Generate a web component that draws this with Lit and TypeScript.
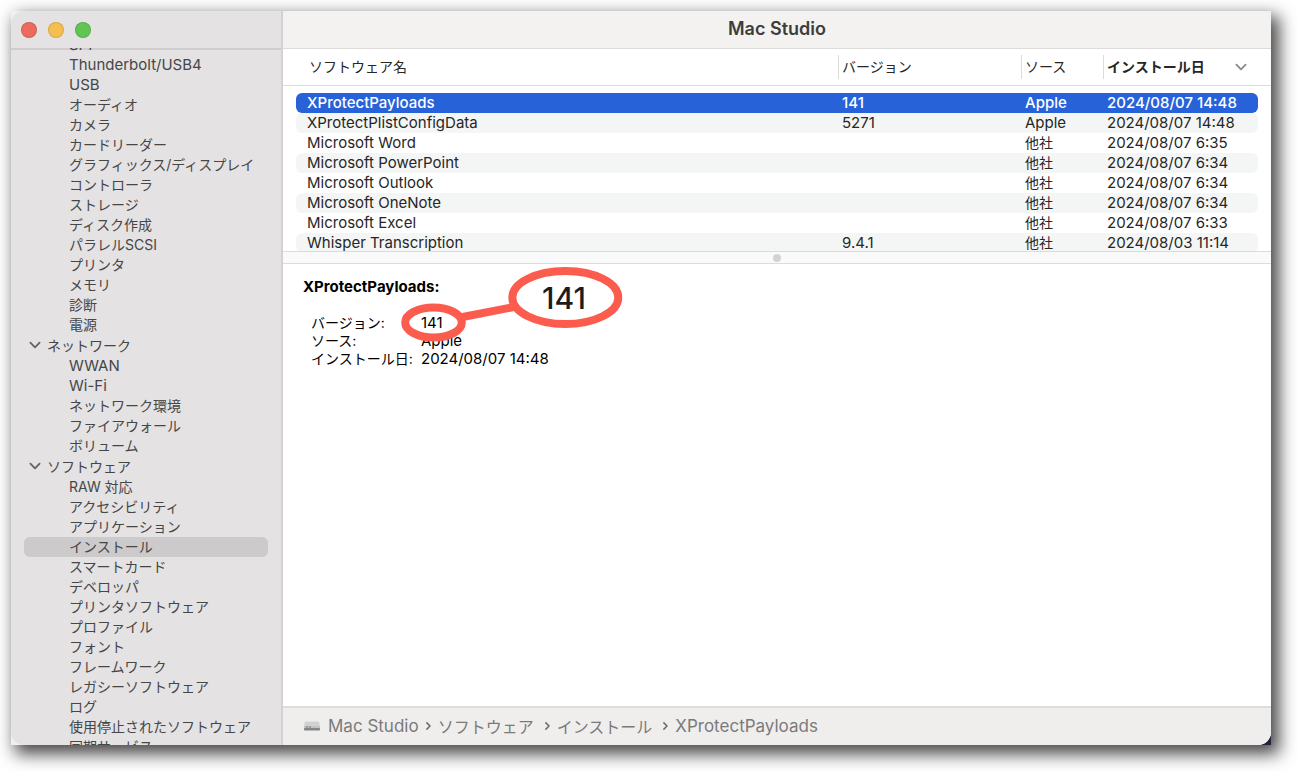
import { LitElement, html, css, svg } from "lit";
import { customElement, state } from "lit/decorators.js";
import { classMap } from "lit/directives/class-map.js";

interface Group {
  title: string;
  items: string[];
}

interface Install {
  name: string;
  version: string;
  source: string;
  date: string;
}

const GROUPS: Group[] = [
  {
    title: "",
    items: [
      "SPI", "Thunderbolt/USB4", "USB", "オーディオ", "カメラ", "カードリーダー",
      "グラフィックス/ディスプレイ", "コントローラ", "ストレージ", "ディスク作成",
      "パラレルSCSI", "プリンタ", "メモリ", "診断", "電源",
    ],
  },
  {
    title: "ネットワーク",
    items: ["WWAN", "Wi-Fi", "ネットワーク環境", "ファイアウォール", "ボリューム"],
  },
  {
    title: "ソフトウェア",
    items: [
      "RAW 対応", "アクセシビリティ", "アプリケーション", "インストール", "スマートカード",
      "デベロッパ", "プリンタソフトウェア", "プロファイル", "フォント", "フレームワーク",
      "レガシーソフトウェア", "ログ", "使用停止されたソフトウェア", "同期サービス",
    ],
  },
];

const INSTALLS: Install[] = [
  { name: "XProtectPayloads", version: "141", source: "Apple", date: "2024/08/07 14:48" },
  { name: "XProtectPlistConfigData", version: "5271", source: "Apple", date: "2024/08/07 14:48" },
  { name: "Microsoft Word", version: "", source: "他社", date: "2024/08/07 6:35" },
  { name: "Microsoft PowerPoint", version: "", source: "他社", date: "2024/08/07 6:34" },
  { name: "Microsoft Outlook", version: "", source: "他社", date: "2024/08/07 6:34" },
  { name: "Microsoft OneNote", version: "", source: "他社", date: "2024/08/07 6:34" },
  { name: "Microsoft Excel", version: "", source: "他社", date: "2024/08/07 6:33" },
  { name: "Whisper Transcription", version: "9.4.1", source: "他社", date: "2024/08/03 11:14" },
];

// Latin-only strings are set one pixel larger than Japanese ones.
const isLatin = (text: string) => /^[\x20-\x7e]+$/.test(text);

const chevron = html`<svg class="chevron" viewBox="0 0 12 8" width="12" height="8" aria-hidden="true">
  ${svg`<path d="M1.4 1.6 L6 6.4 L10.6 1.6" fill="none" stroke="currentColor" stroke-width="1.8" stroke-linecap="round" stroke-linejoin="round" />`}
</svg>`;

@customElement("info-sidebar")
export class InfoSidebar extends LitElement {
  @state() private selected = "インストール";

  static styles = css`
    :host {
      display: flex;
      flex-direction: column;
      min-height: 0;
      background: #e4e2e3;
      border-right: 2px solid #d3d1d2;
    }
    .controls {
      display: flex;
      flex: none;
      gap: 11px;
      height: 37px;
      padding: 0 10px;
      align-items: center;
    }
    .light {
      width: 16px;
      height: 16px;
      padding: 0;
      border: 1px solid rgba(0, 0, 0, 0.12);
      border-radius: 50%;
    }
    .close { background: #ed6a5e; }
    .minimize { background: #f5bf4f; }
    .zoom { background: #61c554; }
    .tree {
      flex: 1;
      min-height: 0;
      overflow: hidden;
      box-shadow: inset 0 2px 0 #cfcdce;
    }
    .scrolled {
      margin-top: -13px;
      padding: 0 13px;
    }
    .group {
      display: flex;
      flex-direction: column;
    }
    button {
      font: inherit;
      color: inherit;
      text-align: left;
      white-space: nowrap;
      background: none;
    }
    .heading {
      display: flex;
      align-items: center;
      gap: 6px;
      height: 20px;
      margin-bottom: 1px;
      padding: 0 0 0 5px;
      border: 0;
    }
    .heading .chevron { color: #656465; }
    .item {
      height: 20px;
      line-height: 20px;
      padding: 0 0 0 45px;
      border: 0;
      border-radius: 6px;
    }
    .item.latin { font-size: 15px; }
    .item.selected { background: #cccacb; }
  `;

  render() {
    return html`
      <div class="controls">
        <button class="light close" aria-label="閉じる"></button>
        <button class="light minimize" aria-label="しまう"></button>
        <button class="light zoom" aria-label="拡大"></button>
      </div>
      <nav class="tree">
        <div class="scrolled">
          ${GROUPS.map(
            (group) => html`<div class="group">
              ${group.title ? html`<button class="heading">${chevron}<span>${group.title}</span></button>` : ""}
              ${group.items.map(
                (item) => html`<button
                  class=${classMap({ item: true, latin: isLatin(item), selected: item === this.selected })}
                  @click=${() => (this.selected = item)}
                >${item}</button>`
              )}
            </div>`
          )}
        </div>
      </nav>
    `;
  }
}

@customElement("install-table")
export class InstallTable extends LitElement {
  static styles = css`
    :host {
      display: block;
      overflow: hidden;
      background: #fff;
    }
    table, thead, tbody { display: block; }
    thead {
      padding: 0 13px;
      border-bottom: 1px solid #dcdcdc;
    }
    tbody { padding: 7px 13px 0; }
    tr {
      display: grid;
      grid-template-columns: minmax(0, 1fr) 183px 82px 155px;
      align-items: center;
    }
    thead tr { height: 36px; }
    th, td {
      padding: 0 0 0 4px;
      text-align: left;
      white-space: nowrap;
      line-height: 20px;
    }
    td:first-child { padding-left: 11px; }
    td.latin { font-size: 15px; }
    th {
      height: 24px;
      line-height: 24px;
      font-weight: 400;
      border-left: 1px solid #dcdcdc;
      padding-left: 3px;
      box-sizing: border-box;
    }
    th:first-child {
      padding-left: 13px;
      border-left: 0;
    }
    .sorted {
      display: flex;
      align-items: center;
      justify-content: space-between;
      padding-right: 11px;
      font-weight: 600;
    }
    .sorted .chevron { color: #8a8a8a; }
    tbody tr { border-radius: 6px; }
    tbody tr:nth-child(even) { background: #f4f5f5; }
    tbody tr.selected {
      color: #fff;
      font-weight: 500;
      background: #2862d9;
    }
  `;

  render() {
    return html`
      <table>
        <thead>
          <tr>
            <th scope="col">ソフトウェア名</th>
            <th scope="col">バージョン</th>
            <th scope="col">ソース</th>
            <th scope="col" class="sorted" aria-sort="descending">インストール日${chevron}</th>
          </tr>
        </thead>
        <tbody>
          ${INSTALLS.map(
            (row, i) => html`<tr class=${classMap({ selected: i === 0 })}>
              ${[row.name, row.version, row.source, row.date].map(
                (value) => html`<td class=${classMap({ latin: isLatin(value) })}>${value}</td>`
              )}
            </tr>`
          )}
        </tbody>
      </table>
    `;
  }
}

@customElement("install-detail")
export class InstallDetail extends LitElement {
  static styles = css`
    :host {
      display: block;
      position: relative;
      padding: 13px 20px;
      overflow: hidden;
      background: #fff;
      color: #000;
    }
    h2 {
      margin: 0;
      font-size: 15px;
      font-weight: 700;
      line-height: 20px;
    }
    dl {
      display: grid;
      grid-template-columns: 110px 1fr;
      margin: 17px 0 0 8px;
      line-height: 18px;
    }
    dt, dd {
      margin: 0;
      white-space: nowrap;
    }
    dd { font-size: 15px; }
    .callout {
      position: absolute;
      left: 118px;
      top: 3px;
    }
    .callout text {
      font-size: 30px;
      font-weight: 500;
      fill: #1c1c1c;
    }
  `;

  render() {
    const item = INSTALLS[0];
    return html`
      <h2>${item.name}:</h2>
      <dl>
        <dt>バージョン:</dt><dd>${item.version}</dd>
        <dt>ソース:</dt><dd>${item.source}</dd>
        <dt>インストール日:</dt><dd>${item.date}</dd>
      </dl>
      <svg class="callout" width="222" height="76" viewBox="0 0 222 76">
        <g fill="none" stroke="#fc5c4e" stroke-width="8">
          <ellipse cx="32.5" cy="55.5" rx="28.3" ry="15" />
          <path d="M59 50.5 L113 40" />
          <ellipse cx="164.3" cy="30.5" rx="53" ry="26.5" fill="#fff" />
        </g>
        <text x="163" y="42" text-anchor="middle">141</text>
      </svg>
    `;
  }
}

@customElement("app-root")
export class AppRoot extends LitElement {
  static styles = css`
    :host {
      display: flex;
      box-sizing: border-box;
      height: 100vh;
      padding: 11px 27px 27px 11px;
      background: #fff;
      color: #262626;
      font-family: Inter, "Noto Sans CJK JP", sans-serif;
      font-size: 14px;
      overflow: hidden;
    }
    .frame {
      display: flex;
      flex: 1;
      min-width: 0;
      background: linear-gradient(135deg, #f0f0f0 99%, #23233a 99%);
      box-shadow: 6px 7px 16px 2px rgba(0, 0, 0, 0.72);
    }
    .window {
      display: grid;
      grid-template-columns: 272px minmax(0, 1fr);
      grid-template-rows: minmax(0, 1fr);
      flex: 1;
      min-width: 0;
      border-radius: 13px;
      overflow: hidden;
    }
    info-sidebar { color: #474647; }
    main {
      display: flex;
      flex-direction: column;
      min-width: 0;
      background: #fff;
    }
    header {
      display: flex;
      flex: none;
      align-items: center;
      justify-content: center;
      height: 37px;
      background: #f3f2f1;
      border-bottom: 1px solid #dcdbda;
    }
    h1 {
      margin: 0;
      padding-bottom: 2px;
      font-size: 18px;
      font-weight: 600;
      color: #3d3d3d;
    }
    install-table { flex: 0 0 202px; }
    .splitter {
      display: flex;
      flex: none;
      align-items: center;
      justify-content: center;
      height: 11px;
      background: #fafafa;
      border-top: 1px solid #dcdcdc;
      border-bottom: 1px solid #dcdcdc;
    }
    .grip {
      width: 8px;
      height: 8px;
      border-radius: 50%;
      background: #d3d3d3;
    }
    install-detail { flex: 1; }
    footer {
      display: flex;
      flex: none;
      align-items: center;
      gap: 7px;
      height: 35px;
      padding: 0 20px 2px;
      background: #efeeed;
      border-top: 2px solid #dedddc;
      font-size: 16px;
      color: #7b7a7a;
      white-space: nowrap;
    }
    .crumb { padding-right: 4px; }
    .crumb.latin {
      padding-right: 0;
      font-size: 17px;
    }
    .disk { flex: none; }
  `;

  render() {
    const path = ["Mac Studio", "ソフトウェア", "インストール", "XProtectPayloads"];
    const arrow = html`<svg width="5" height="8" viewBox="0 0 5 8" aria-hidden="true">
      <path d="M0.9 0.9 L4 4 L0.9 7.1" fill="none" stroke="#6b6a6a" stroke-width="1.5" stroke-linecap="round" stroke-linejoin="round" />
    </svg>`;
    return html`
      <div class="frame">
        <div class="window">
          <info-sidebar></info-sidebar>
          <main>
            <header><h1>Mac Studio</h1></header>
            <install-table></install-table>
            <div class="splitter"><span class="grip"></span></div>
            <install-detail></install-detail>
            <footer>
              <svg class="disk" width="18" height="12" viewBox="0 0 18 12" aria-hidden="true">
                <path d="M2 1.5 H16 L17 7 H1 Z" fill="#d0d1d2" />
                <rect x="1" y="6" width="16" height="3" fill="#c2c3c4" />
                <rect x="1" y="8" width="16" height="2.4" rx="1" fill="#858585" />
                <path d="M3 7 H8" stroke="#777" stroke-width="1" stroke-dasharray="2 1" />
              </svg>
              ${path.map(
                (part, i) => html`${i ? arrow : ""}<span class=${classMap({ crumb: true, latin: isLatin(part) })}>${part}</span>`
              )}
            </footer>
          </main>
        </div>
      </div>
    `;
  }
}
